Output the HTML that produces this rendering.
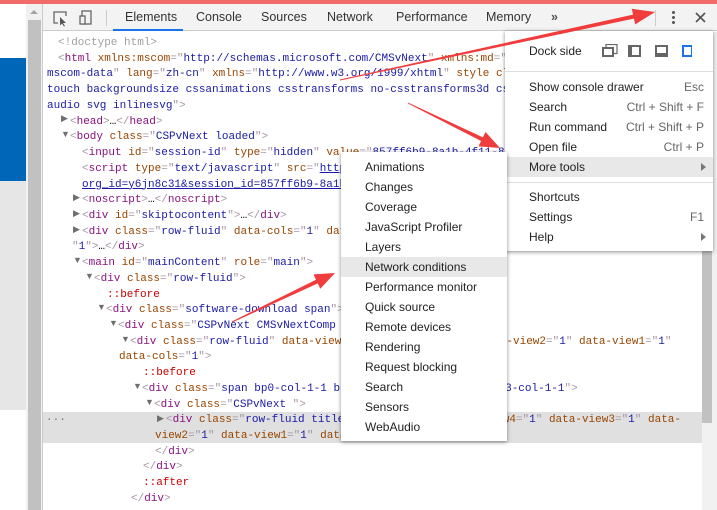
<!DOCTYPE html>
<html><head><style>
*{margin:0;padding:0;box-sizing:border-box}
body{width:717px;height:510px;overflow:hidden;background:#fff;position:relative;font-family:"Liberation Sans",sans-serif}
.abs{position:absolute}
#code{position:absolute;left:43px;top:35px;width:659px;height:475px;overflow:hidden;font-family:"Liberation Mono",monospace;font-size:11px}
#code div{position:absolute;white-space:pre;height:16px;line-height:16px;left:0;width:700px}
.t{color:#881280}.a{color:#994500}.v{color:#1a1aa6}.p{color:#a894a6}.c{color:#a0a0a0}.ps{color:#c80000}.u{color:#1a1aa6;text-decoration:underline}
.tri{position:absolute;font-size:9px;color:#6e6e6e}
.tab{position:absolute;top:10px;font-size:12.5px;color:#333}
.mi{position:absolute;font-size:12px;color:#222;height:20px;line-height:20px}
.sc{position:absolute;right:9px;font-size:12px;color:#666;height:20px;line-height:20px}
</style></head><body>
<div class="abs" style="left:0;top:58px;width:26px;height:123px;background:#0067b8"></div>
<div class="abs" style="left:0;top:181px;width:26px;height:229px;background:#e6e6e6"></div>
<div class="abs" style="left:26px;top:0;width:17px;height:510px;background:#f1f1f1"></div>
<div class="abs" style="left:28px;top:20px;width:13px;height:490px;background:#c1c1c1"></div>
<div class="abs" style="left:30px;top:10px;width:0;height:0;border-left:4px solid transparent;border-right:4px solid transparent;border-bottom:4px solid #a3a3a3"></div>
<div class="abs" style="left:42px;top:0;width:1px;height:510px;background:#ccc"></div>
<div class="abs" style="left:43px;top:3px;width:674px;height:28px;background:#f3f3f3;border-bottom:1px solid #ccc"></div>
<div class="abs" style="left:0;top:0;width:717px;height:4px;background:#f26b6b"></div>
<svg class="abs" style="left:50px;top:9px" width="50" height="18">
<path d="M8 14H4V3h12v4" fill="none" stroke="#666" stroke-width="1.3"/>
<path d="M10 8l6 6h-3l2 3-1 .5-2-3-2 2z" fill="#555"/>
<rect x="32" y="2" width="9" height="13" fill="none" stroke="#666" stroke-width="1.3"/>
<rect x="30" y="7" width="5" height="8" fill="#f3f3f3" stroke="#666" stroke-width="1.3"/>
</svg>
<div class="abs" style="left:106px;top:10px;width:1px;height:16px;background:#ccc"></div>
<div class="tab" style="left:125px">Elements</div>
<div class="abs" style="left:113px;top:29px;width:70px;height:2px;background:#1a73e8"></div>
<div class="tab" style="left:196px">Console</div>
<div class="tab" style="left:261px">Sources</div>
<div class="tab" style="left:327px">Network</div>
<div class="tab" style="left:396px">Performance</div>
<div class="tab" style="left:486px">Memory</div>
<div class="tab" style="left:551px;font-weight:bold;color:#555">»</div>
<div class="abs" style="left:655px;top:10px;width:1px;height:16px;background:#ccc"></div>
<div class="abs" style="left:672px;top:11px;width:3px;height:3px;background:#555;border-radius:50%"></div>
<div class="abs" style="left:672px;top:16px;width:3px;height:3px;background:#555;border-radius:50%"></div>
<div class="abs" style="left:672px;top:21px;width:3px;height:3px;background:#555;border-radius:50%"></div>
<svg class="abs" style="left:695px;top:12px" width="11" height="11"><path d="M1 1L10 10M10 1L1 10" stroke="#555" stroke-width="1.7"/></svg>
<div class="abs" style="left:702px;top:32px;width:15px;height:478px;background:#f1f1f1"></div>
<div class="abs" style="left:702px;top:36px;width:10px;height:387px;background:#c1c1c1"></div>
<div class="abs" style="left:43px;top:412px;width:659px;height:31px;background:#e0e0e0"></div>
<div class="abs" style="left:46px;top:412px;font-size:11px;color:#777;font-family:'Liberation Mono',monospace">...</div>
<div id="code">
<div style="top:0;left:15px" class="c">&lt;!doctype html&gt;</div>
<div style="top:15.7px;left:15px"><span class="p">&lt;</span><span class="t">html</span> <span class="a">xmlns:mscom</span><span class="p">="</span><span class="v">http://schemas.microsoft.com/CMSvNext</span><span class="p">"</span> <span class="a">xmlns:md</span><span class="p">="</span></div>
<div style="top:31.4px;left:4px"><span class="v">mscom-data</span><span class="p">"</span> <span class="a">lang</span><span class="p">="</span><span class="v">zh-cn</span><span class="p">"</span> <span class="a">xmlns</span><span class="p">="</span><span class="v">http://www.w3.org/1999/xhtml</span><span class="p">"</span> <span class="a">style cl</span></div>
<div style="top:47.2px;left:4px" class="v">touch backgroundsize cssanimations csstransforms no-csstransforms3d cs</div>
<div style="top:62.9px;left:4px"><span class="v">audio svg inlinesvg</span><span class="p">"&gt;</span></div>
<div style="top:78.6px;left:27px"><span class="p">&lt;</span><span class="t">head</span><span class="p">&gt;</span>…<span class="p">&lt;/</span><span class="t">head</span><span class="p">&gt;</span></div>
<div style="top:94.3px;left:27px"><span class="p">&lt;</span><span class="t">body</span> <span class="a">class</span><span class="p">="</span><span class="v">CSPvNext loaded</span><span class="p">"&gt;</span></div>
<div style="top:110px;left:39px"><span class="p">&lt;</span><span class="t">input</span> <span class="a">id</span><span class="p">="</span><span class="v">session-id</span><span class="p">"</span> <span class="a">type</span><span class="p">="</span><span class="v">hidden</span><span class="p">"</span> <span class="a">value</span><span class="p">="</span><span class="v">857ff6b9-8a1b-4f11-8</span></div>
<div style="top:125.8px;left:39px"><span class="p">&lt;</span><span class="t">script</span> <span class="a">type</span><span class="p">="</span><span class="v">text/javascript</span><span class="p">"</span> <span class="a">src</span><span class="p">="</span><span class="u">https://c.s-microsoft.com/</span></div>
<div style="top:141.5px;left:39px"><span class="u">org_id=y6jn8c31&amp;session_id=857ff6b9-8a1b-4f11</span></div>
<div style="top:157.2px;left:39px"><span class="p">&lt;</span><span class="t">noscript</span><span class="p">&gt;</span>…<span class="p">&lt;/</span><span class="t">noscript</span><span class="p">&gt;</span></div>
<div style="top:172.9px;left:39px"><span class="p">&lt;</span><span class="t">div</span> <span class="a">id</span><span class="p">="</span><span class="v">skiptocontent</span><span class="p">"&gt;</span>…<span class="p">&lt;/</span><span class="t">div</span><span class="p">&gt;</span></div>
<div style="top:188.6px;left:39px"><span class="p">&lt;</span><span class="t">div</span> <span class="a">class</span><span class="p">="</span><span class="v">row-fluid</span><span class="p">"</span> <span class="a">data-cols</span><span class="p">="</span><span class="v">1</span><span class="p">"</span> <span class="a">data-view</span></div>
<div style="top:204.4px;left:29px"><span class="p">"</span><span class="v">1</span><span class="p">"&gt;</span>…<span class="p">&lt;/</span><span class="t">div</span><span class="p">&gt;</span></div>
<div style="top:220.1px;left:39px"><span class="p">&lt;</span><span class="t">main</span> <span class="a">id</span><span class="p">="</span><span class="v">mainContent</span><span class="p">"</span> <span class="a">role</span><span class="p">="</span><span class="v">main</span><span class="p">"&gt;</span></div>
<div style="top:235.8px;left:51px"><span class="p">&lt;</span><span class="t">div</span> <span class="a">class</span><span class="p">="</span><span class="v">row-fluid</span><span class="p">"&gt;</span></div>
<div style="top:251.5px;left:64px" class="ps">::before</div>
<div style="top:267.2px;left:63px"><span class="p">&lt;</span><span class="t">div</span> <span class="a">class</span><span class="p">="</span><span class="v">software-download span</span><span class="p">"&gt;</span></div>
<div style="top:283px;left:75px"><span class="p">&lt;</span><span class="t">div</span> <span class="a">class</span><span class="p">="</span><span class="v">CSPvNext CMSvNextComp</span></div>
<div style="top:298.7px;left:87px"><span class="p">&lt;</span><span class="t">div</span> <span class="a">class</span><span class="p">="</span><span class="v">row-fluid</span><span class="p">"</span> <span class="a">data-view4</span><span class="p">="</span><span class="v">1</span><span class="p">"</span> <span class="a">data-view3</span><span class="p">="</span><span class="v">1</span><span class="p">"</span> <span class="a">data-view2</span><span class="p">="</span><span class="v">1</span><span class="p">"</span> <span class="a">data-view1</span><span class="p">="</span><span class="v">1</span><span class="p">"</span></div>
<div style="top:314.4px;left:76px"><span class="a">data-cols</span><span class="p">="</span><span class="v">1</span><span class="p">"&gt;</span></div>
<div style="top:330.1px;left:100px" class="ps">::before</div>
<div style="top:345.8px;left:99px"><span class="p">&lt;</span><span class="t">div</span> <span class="a">class</span><span class="p">="</span><span class="v">span bp0-col-1-1 bp1-col-1-1 bp2-col-1-1 bp3-col-1-1</span><span class="p">"&gt;</span></div>
<div style="top:361.6px;left:111px"><span class="p">&lt;</span><span class="t">div</span> <span class="a">class</span><span class="p">="</span><span class="v">CSPvNext </span><span class="p">"&gt;</span></div>
<div style="top:377.3px;left:123px"><span class="p">&lt;</span><span class="t">div</span> <span class="a">class</span><span class="p">="</span><span class="v">row-fluid title-box-container</span><span class="p">"</span> <span class="a">data-view4</span><span class="p">="</span><span class="v">1</span><span class="p">"</span> <span class="a">data-view3</span><span class="p">="</span><span class="v">1</span><span class="p">"</span> <span class="a">data-</span></div>
<div style="top:393px;left:112px"><span class="a">view2</span><span class="p">="</span><span class="v">1</span><span class="p">"</span> <span class="a">data-view1</span><span class="p">="</span><span class="v">1</span><span class="p">"</span> <span class="a">data-cols</span><span class="p">="</span><span class="v">1</span><span class="p">"&gt;</span></div>
<div style="top:408.7px;left:112px"><span class="p">&lt;/</span><span class="t">div</span><span class="p">&gt;</span></div>
<div style="top:424.4px;left:100px"><span class="p">&lt;/</span><span class="t">div</span><span class="p">&gt;</span></div>
<div style="top:440.2px;left:100px" class="ps">::after</div>
<div style="top:455.9px;left:88px"><span class="p">&lt;/</span><span class="t">div</span><span class="p">&gt;</span></div>
</div>
<div class="tri" style="left:61px;top:113px">▶</div>
<div class="tri" style="left:61px;top:129px">▼</div>
<div class="tri" style="left:73px;top:192px">▶</div>
<div class="tri" style="left:73px;top:208px">▶</div>
<div class="tri" style="left:73px;top:224px">▶</div>
<div class="tri" style="left:73px;top:255px">▼</div>
<div class="tri" style="left:85px;top:271px">▼</div>
<div class="tri" style="left:97px;top:302px">▼</div>
<div class="tri" style="left:109px;top:318px">▼</div>
<div class="tri" style="left:121px;top:334px">▼</div>
<div class="tri" style="left:133px;top:381px">▼</div>
<div class="tri" style="left:145px;top:397px">▼</div>
<div class="tri" style="left:157px;top:413px">▶</div>
<div class="abs" style="left:505px;top:31px;width:208px;height:220px;background:#fff;box-shadow:0 1px 4px rgba(0,0,0,.45)">
<div class="mi" style="left:24px;top:10px">Dock side</div>
<svg class="abs" style="left:97px;top:13px" width="90" height="15">
<rect x="4" y="0.5" width="11" height="9" fill="none" stroke="#666" stroke-width="1.2"/><rect x="0" y="3" width="12" height="10" fill="#666"/><rect x="2" y="5" width="8" height="6" fill="#fff"/>
<rect x="26" y="1" width="13" height="12" fill="#666"/><rect x="30" y="3" width="7" height="8" fill="#fff"/>
<rect x="53" y="1" width="13" height="12" fill="#666"/><rect x="55" y="3" width="9" height="6" fill="#fff"/>
<rect x="80" y="1" width="13" height="12" fill="#1a73e8"/><rect x="82" y="3" width="7" height="8" fill="#fff"/>
</svg>
<div class="abs" style="left:0;top:40px;width:208px;height:1px;background:#ddd"></div>
<div class="mi" style="left:24px;top:46px">Show console drawer</div><div class="sc" style="top:46px">Esc</div>
<div class="mi" style="left:24px;top:66px">Search</div><div class="sc" style="top:66px">Ctrl + Shift + F</div>
<div class="mi" style="left:24px;top:86px">Run command</div><div class="sc" style="top:86px">Ctrl + Shift + P</div>
<div class="mi" style="left:24px;top:106px">Open file</div><div class="sc" style="top:106px">Ctrl + P</div>
<div class="abs" style="left:0;top:126px;width:208px;height:20px;background:#e8e8e8"></div>
<div class="mi" style="left:24px;top:126px">More tools</div><div class="abs" style="left:196px;top:132px;border-top:4px solid transparent;border-bottom:4px solid transparent;border-left:5px solid #777"></div>
<div class="abs" style="left:0;top:151px;width:208px;height:1px;background:#ddd"></div>
<div class="mi" style="left:24px;top:156px">Shortcuts</div>
<div class="mi" style="left:24px;top:176px">Settings</div><div class="sc" style="top:176px">F1</div>
<div class="mi" style="left:24px;top:196px">Help</div><div class="abs" style="left:196px;top:202px;border-top:4px solid transparent;border-bottom:4px solid transparent;border-left:5px solid #777"></div>
</div>
<div class="abs" style="left:341px;top:152px;width:166px;height:289px;background:#fff;box-shadow:0 1px 4px rgba(0,0,0,.45)">
<div class="abs" style="left:0;top:105px;width:166px;height:20px;background:#e8e8e8"></div>
<div class="mi" style="left:24px;top:5px">Animations</div>
<div class="mi" style="left:24px;top:25px">Changes</div>
<div class="mi" style="left:24px;top:45px">Coverage</div>
<div class="mi" style="left:24px;top:65px">JavaScript Profiler</div>
<div class="mi" style="left:24px;top:85px">Layers</div>
<div class="mi" style="left:24px;top:105px">Network conditions</div>
<div class="mi" style="left:24px;top:125px">Performance monitor</div>
<div class="mi" style="left:24px;top:145px">Quick source</div>
<div class="mi" style="left:24px;top:165px">Remote devices</div>
<div class="mi" style="left:24px;top:185px">Rendering</div>
<div class="mi" style="left:24px;top:205px">Request blocking</div>
<div class="mi" style="left:24px;top:225px">Search</div>
<div class="mi" style="left:24px;top:245px">Sensors</div>
<div class="mi" style="left:24px;top:265px">WebAudio</div>
</div>
<svg class="abs" style="left:0;top:0" width="717" height="510">
<polygon fill="#f03c3c" points="340.1,80.5 633.9,18.6 635.2,24.4 655,12 631.8,8.8 633.1,14.6 339.9,79.5"/>
<polygon fill="#f03c3c" points="407.8,103.4 481.1,141 478.5,146.4 500,148 485.5,132 482.9,137.4 408.2,102.6"/>
<polygon fill="#f03c3c" points="232.2,322.5 317.8,283.4 320.3,288.8 335,273 313.5,274.4 316,279.8 231.8,321.5"/>
</svg>
</body></html>
